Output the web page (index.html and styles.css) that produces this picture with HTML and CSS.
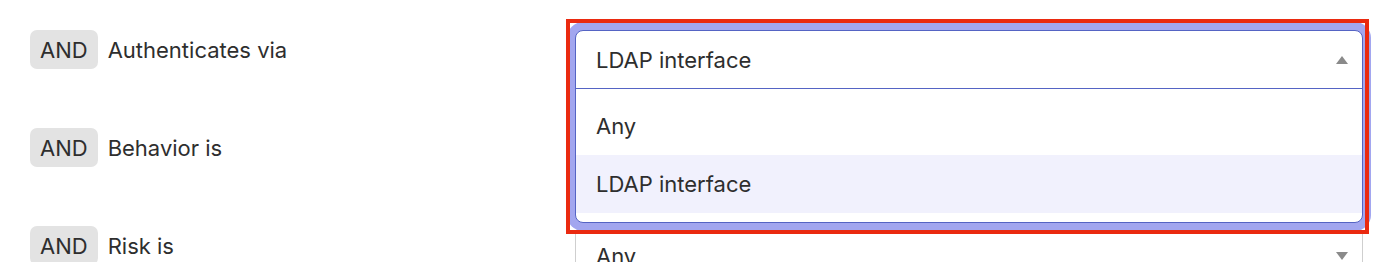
FILE: index.html
```html
<!DOCTYPE html>
<html lang="en">
<head>
  <meta charset="UTF-8" />
  <title>Conditions</title>
  <link rel="stylesheet" href="styles.css">
</head>
<body>
  <div class="conditions">
    <div class="row">
      <div class="cond">
        <span class="badge">AND</span>
        <span class="label">Authenticates via</span>
      </div>
      <div class="field">
        <div class="dropdown">
          <div class="dd-head">
            <span>LDAP interface</span>
            <span class="caret up"></span>
          </div>
          <ul class="dd-list">
            <li>Any</li>
            <li class="active">LDAP interface</li>
          </ul>
          <div class="highlight"></div>
        </div>
      </div>
    </div>

    <div class="row">
      <div class="cond">
        <span class="badge">AND</span>
        <span class="label">Behavior is</span>
      </div>
      <div class="field">
        <div class="select">
          <span>Any</span>
          <span class="caret down"></span>
        </div>
      </div>
    </div>

    <div class="row">
      <div class="cond">
        <span class="badge">AND</span>
        <span class="label">Risk is</span>
      </div>
      <div class="field">
        <div class="select">
          <span>Any</span>
          <span class="caret down"></span>
        </div>
      </div>
    </div>
  </div>
</body>
</html>
```

FILE: styles.css
```css
html, body {
  margin: 0;
  padding: 0;
  background: #fff;
  color: #2e2e2e;
  font-family: 'Inter', sans-serif;
  font-size: 22px;
  overflow: hidden;
}
.conditions {
  padding: 30px 35px 0 30px;
}
.row {
  display: flex;
  align-items: flex-start;
  margin-bottom: 39px;
}
.cond {
  width: 545px;
  height: 39px;
  display: flex;
  align-items: center;
  gap: 10px;
}
.badge {
  background: #e3e3e3;
  border-radius: 7px;
  height: 39px;
  padding: 0 10px;
  display: flex;
  align-items: center;
}
.field {
  flex: 1;
  position: relative;
  height: 59px;
}
.select {
  height: 57px;
  border: 1px solid #cfcfcf;
  border-radius: 8px;
  display: flex;
  align-items: center;
  justify-content: space-between;
  padding: 0 14px 0 20px;
}
.caret {
  width: 0;
  height: 0;
  border-left: 6px solid transparent;
  border-right: 6px solid transparent;
}
.caret.up {
  border-bottom: 8px solid #8a8a8a;
}
.caret.down {
  border-top: 8px solid #8a8a8a;
}
.dropdown {
  position: absolute;
  top: 0;
  left: 0;
  right: 0;
  z-index: 5;
  background: #fff;
  border: 1px solid #5564c4;
  border-radius: 8px;
  box-shadow: 0 0 0 8px #a2a6ef;
}
.dd-head {
  height: 57px;
  border-bottom: 1px solid #5564c4;
  display: flex;
  align-items: center;
  justify-content: space-between;
  padding: 0 14px 0 20px;
}
.dd-list {
  list-style: none;
  margin: 0;
  padding: 8px 0 9px;
}
.dd-list li {
  height: 58px;
  display: flex;
  align-items: center;
  padding: 0 20px;
}
.dd-list li.active {
  background: #f1f1fd;
}
.highlight {
  position: absolute;
  top: -12px;
  left: -10px;
  right: -7px;
  bottom: -12px;
  border: 4px solid #ea2a10;
  pointer-events: none;
}
```
